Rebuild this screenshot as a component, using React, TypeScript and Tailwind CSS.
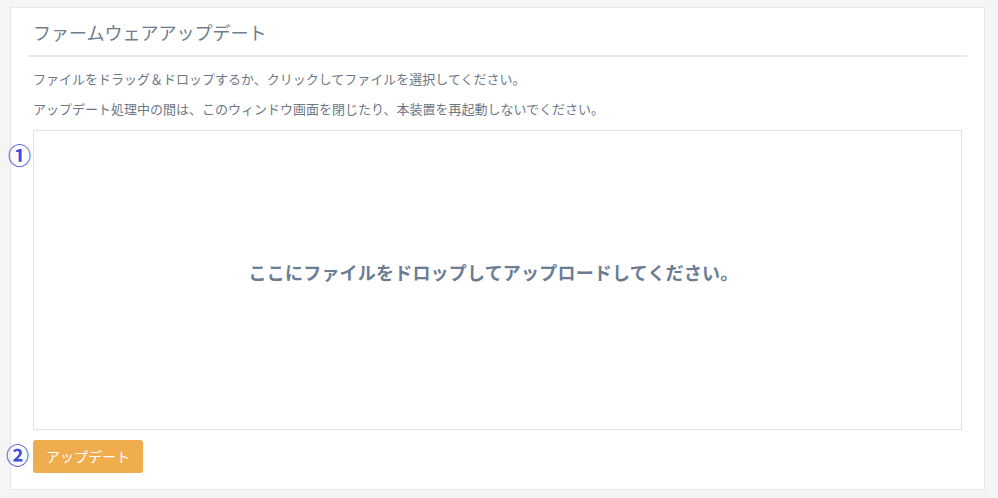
export default function App() {
  return (
    <div
      className="relative min-h-[498px] w-full bg-[#f5f5f5] pt-[7px]"
      style={{ fontFamily: '"Noto Sans CJK JP", "Noto Sans", sans-serif' }}
    >
      <div className="ml-[10px] w-[975px] border border-[#e3e6ea] bg-white">
        <div className="mx-[17px] border-b-2 border-[#e6e9ed] pb-[11px] pl-[5px] pt-3">
          <h1 className="text-[18px] leading-6 font-normal text-[#6e7c8c]">ファームウェアアップデート</h1>
        </div>
        <div className="px-[22px] pb-4 pt-3">
          <p className="text-[13px] leading-5 text-[#6c7886]">
            ファイルをドラッグ＆ドロップするか、クリックしてファイルを選択してください。
          </p>
          <p className="mt-[10px] text-[13px] leading-5 text-[#6c7886]">
            アップデート処理中の間は、このウィンドウ画面を閉じたり、本装置を再起動しないでください。
          </p>
          <div className="mt-[11px] flex h-[300px] w-[929px] items-center justify-center border border-[#e2e2e2] bg-white pb-4 pr-[8px]">
            <span className="text-[18px] font-bold tracking-[0.2px] text-[#6a7d94]">
              ここにファイルをドロップしてアップロードしてください。
            </span>
          </div>
          <button
            type="button"
            className="mt-[10px] h-[33px] w-[110px] rounded-[3px] bg-[#f0ad4e] text-[14px] text-white"
          >
            アップデート
          </button>
        </div>
      </div>
      <span className="absolute left-[8px] top-[142px] text-[23px] font-bold leading-6 text-[#3d4fe0]">①</span>
      <span className="absolute left-[6px] top-[442px] text-[23px] font-bold leading-6 text-[#3d4fe0]">②</span>
    </div>
  );
}
